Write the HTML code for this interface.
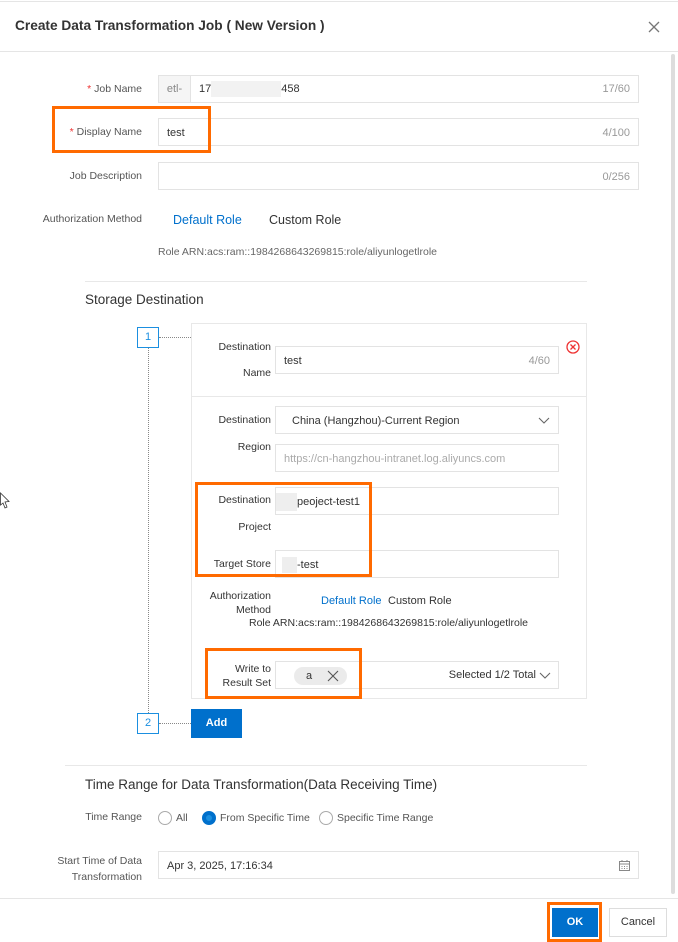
<!DOCTYPE html>
<html><head><meta charset="utf-8"><style>
*{box-sizing:border-box;margin:0;padding:0}
body{width:678px;height:942px;background:#fff;font-family:"Liberation Sans",sans-serif;color:#333;position:relative;overflow:hidden;font-size:11px}
.a{position:absolute}
.inp{position:absolute;border:1px solid #e3e3e3;background:#fff;height:28px;font-size:11px;line-height:28px;padding-left:8px;color:#333}
.cnt{position:absolute;right:8px;top:0;color:#999;font-size:11px}
.lbl{position:absolute;text-align:right;color:#555;font-size:10.5px}
.ob{position:absolute;border:3px solid #ff6a00}
.dh{position:absolute;border-top:1px dotted #888;height:0}
.num{position:absolute;width:22px;height:21px;border:1px solid #1b8fe0;color:#1b8fe0;font-size:11px;text-align:center;line-height:19px;background:#fff}
.rad{position:absolute;width:14px;height:14px;border:1px solid #aaa;border-radius:50%;background:#fff}
</style></head><body>
<div class="a" style="left:0;top:1px;width:678px;border-top:1px solid #e5e5e5"></div>
<div class="a" style="left:15px;top:18px;font-size:13.7px;font-weight:bold;color:#333">Create Data Transformation Job ( New Version )</div>
<svg class="a" style="left:648px;top:21px" width="12" height="12"><path d="M1 1L11 11M11 1L1 11" stroke="#777" stroke-width="1.3"/></svg>
<div class="a" style="left:0;top:51px;width:678px;border-top:1px solid #e5e5e5"></div>
<div class="a" style="left:671px;top:54px;width:4px;height:840px;background:#ddd;border-radius:2px"></div>

<div class="lbl" style="left:40px;width:102px;top:83px"><span style="color:#e33">* </span>Job Name</div>
<div class="inp" style="left:158px;top:75px;width:481px;padding-left:0;line-height:26px">
 <span style="display:inline-block;width:32px;height:26px;background:#f5f5f5;border-right:1px solid #e3e3e3;text-align:center;color:#888">etl-</span><span style="padding-left:8px">17</span><span style="display:inline-block;width:70px;height:16px;background:#f2f2f2;vertical-align:middle"></span>458<span class="cnt">17/60</span></div>
<div class="lbl" style="left:40px;width:102px;top:126px"><span style="color:#e33">* </span>Display Name</div>
<div class="inp" style="left:158px;top:118px;width:481px">test<span class="cnt">4/100</span></div>
<div class="ob" style="left:52px;top:106px;width:159px;height:47px"></div>
<div class="lbl" style="left:40px;width:102px;top:170px">Job Description</div>
<div class="inp" style="left:158px;top:162px;width:481px"><span class="cnt">0/256</span></div>
<div class="lbl" style="left:20px;width:122px;top:213px">Authorization Method</div>
<div class="a" style="left:173px;top:213px;font-size:12.5px;color:#0070cc">Default Role</div>
<div class="a" style="left:269px;top:213px;font-size:12.5px;color:#333">Custom Role</div>
<div class="a" style="left:158px;top:246px;font-size:10.5px;color:#666">Role ARN:acs:ram::1984268643269815:role/aliyunlogetlrole</div>
<div class="a" style="left:85px;top:281px;width:502px;border-top:1px solid #e8e8e8"></div>
<div class="a" style="left:85px;top:292px;font-size:13.5px;color:#333">Storage Destination</div>

<div class="a" style="left:148px;top:347px;height:366px;border-left:1px dotted #888"></div>
<div class="num" style="left:137px;top:327px">1</div>
<div class="dh" style="left:159px;top:337px;width:32px"></div>
<div class="num" style="left:137px;top:713px">2</div>
<div class="dh" style="left:159px;top:723px;width:32px"></div>

<div class="a" style="left:191px;top:323px;width:396px;height:376px;border:1px solid #e8e8e8"></div>
<div class="a" style="left:192px;top:396px;width:394px;border-top:1px solid #e8e8e8"></div>
<div class="lbl" style="left:195px;width:76px;top:334px;line-height:26px;color:#333">Destination<br>Name</div>
<div class="inp" style="left:275px;top:346px;width:284px">test<span class="cnt">4/60</span></div>
<svg class="a" style="left:566px;top:340px" width="14" height="14"><circle cx="7" cy="7" r="6" fill="none" stroke="#e33" stroke-width="1.3"/><path d="M4.5 4.5L9.5 9.5M9.5 4.5L4.5 9.5" stroke="#e33" stroke-width="1.3"/></svg>
<div class="lbl" style="left:195px;width:76px;top:407px;line-height:27px;color:#333">Destination<br>Region</div>
<div class="inp" style="left:275px;top:406px;width:284px;padding-left:16px">China (Hangzhou)-Current Region
<svg class="a" style="right:8px;top:10px" width="12" height="8"><path d="M1 1L6 6L11 1" fill="none" stroke="#666" stroke-width="1.1"/></svg></div>
<div class="inp" style="left:275px;top:444px;width:284px;color:#aaa">https://cn-hangzhou-intranet.log.aliyuncs.com</div>
<div class="lbl" style="left:195px;width:76px;top:487px;line-height:27px;color:#333">Destination<br>Project</div>
<div class="inp" style="left:275px;top:487px;width:284px;padding-left:0"><span style="display:inline-block;width:21px;height:18px;background:#eee;vertical-align:middle"></span>peoject-test1</div>
<div class="lbl" style="left:195px;width:76px;top:558px;color:#333">Target Store</div>
<div class="inp" style="left:275px;top:550px;width:284px;padding-left:6px"><span style="display:inline-block;width:15px;height:16px;background:#eee;vertical-align:middle"></span>-test</div>
<div class="ob" style="left:195px;top:482px;width:177px;height:95px"></div>
<div class="lbl" style="left:195px;width:76px;top:589px;line-height:14px;color:#333">Authorization<br>Method</div>
<div class="a" style="left:321px;top:595px;font-size:11px;color:#0070cc">Default Role</div>
<div class="a" style="left:388px;top:595px;font-size:11px;color:#333">Custom Role</div>
<div class="a" style="left:249px;top:617px;font-size:10.5px;color:#333">Role ARN:acs:ram::1984268643269815:role/aliyunlogetlrole</div>
<div class="lbl" style="left:195px;width:76px;top:662px;line-height:14px;color:#333">Write to<br>Result Set</div>
<div class="inp" style="left:275px;top:661px;width:284px;line-height:26px">
 <span class="a" style="left:18px;top:5px;width:53px;height:18px;border-radius:9px;background:#ebebeb;line-height:18px;padding-left:12px">a</span>
 <svg class="a" style="left:51px;top:8px" width="12" height="12"><path d="M1 1L11 11M11 1L1 11" stroke="#555" stroke-width="1.1"/></svg>
 <span class="a" style="right:22px;top:0">Selected 1/2 Total</span>
 <svg class="a" style="right:7px;top:10px" width="12" height="8"><path d="M1 1L6 6L11 1" fill="none" stroke="#666" stroke-width="1.1"/></svg></div>
<div class="ob" style="left:205px;top:648px;width:157px;height:51px"></div>
<div class="a" style="left:191px;top:709px;width:51px;height:29px;background:#0070cc;color:#fff;font-weight:bold;font-size:11px;text-align:center;line-height:29px">Add</div>

<div class="a" style="left:65px;top:765px;width:522px;border-top:1px solid #e8e8e8"></div>
<div class="a" style="left:85px;top:777px;font-size:13.5px;color:#333">Time Range for Data Transformation(Data Receiving Time)</div>
<div class="lbl" style="left:40px;width:102px;top:811px">Time Range</div>
<div class="rad" style="left:158px;top:811px"></div><div class="a" style="left:176px;top:812px;font-size:10.5px;color:#555">All</div>
<div class="rad" style="left:202px;top:811px;border:4px solid #0070cc;background:#1b8fe0"></div><div class="a" style="left:220px;top:812px;font-size:10.5px;color:#555">From Specific Time</div>
<div class="rad" style="left:319px;top:811px"></div><div class="a" style="left:337px;top:812px;font-size:10.5px;color:#555">Specific Time Range</div>
<div class="lbl" style="left:30px;width:112px;top:853px;line-height:16px">Start Time of Data<br>Transformation</div>
<div class="inp" style="left:158px;top:851px;width:481px">Apr 3, 2025, 17:16:34
<svg class="a" style="right:8px;top:8px" width="11" height="11"><rect x="0.5" y="1.5" width="10" height="9" fill="none" stroke="#888"/><path d="M0.5 4h10M3 0v2M8 0v2M2.5 6.5h1M5 6.5h1M7.5 6.5h1M2.5 8.5h1M5 8.5h1M7.5 8.5h1" stroke="#888"/></svg></div>
<div class="a" style="left:0;top:898px;width:678px;border-top:1px solid #e5e5e5"></div>
<div class="a" style="left:552px;top:908px;width:46px;height:29px;background:#0070cc;color:#fff;font-weight:bold;font-size:11px;text-align:center;line-height:29px">OK</div>
<div class="ob" style="left:547px;top:902px;width:55px;height:40px"></div>
<div class="a" style="left:609px;top:908px;width:58px;height:29px;border:1px solid #ddd;color:#333;font-size:11px;text-align:center;line-height:27px">Cancel</div>
<svg class="a" style="left:0;top:492px" width="10" height="18"><path d="M0.5 1L9 9.5L5 10L7 15L5 16L3 11L0.5 13Z" fill="#fff" stroke="#333" stroke-width="0.8"/></svg>
</body></html>
